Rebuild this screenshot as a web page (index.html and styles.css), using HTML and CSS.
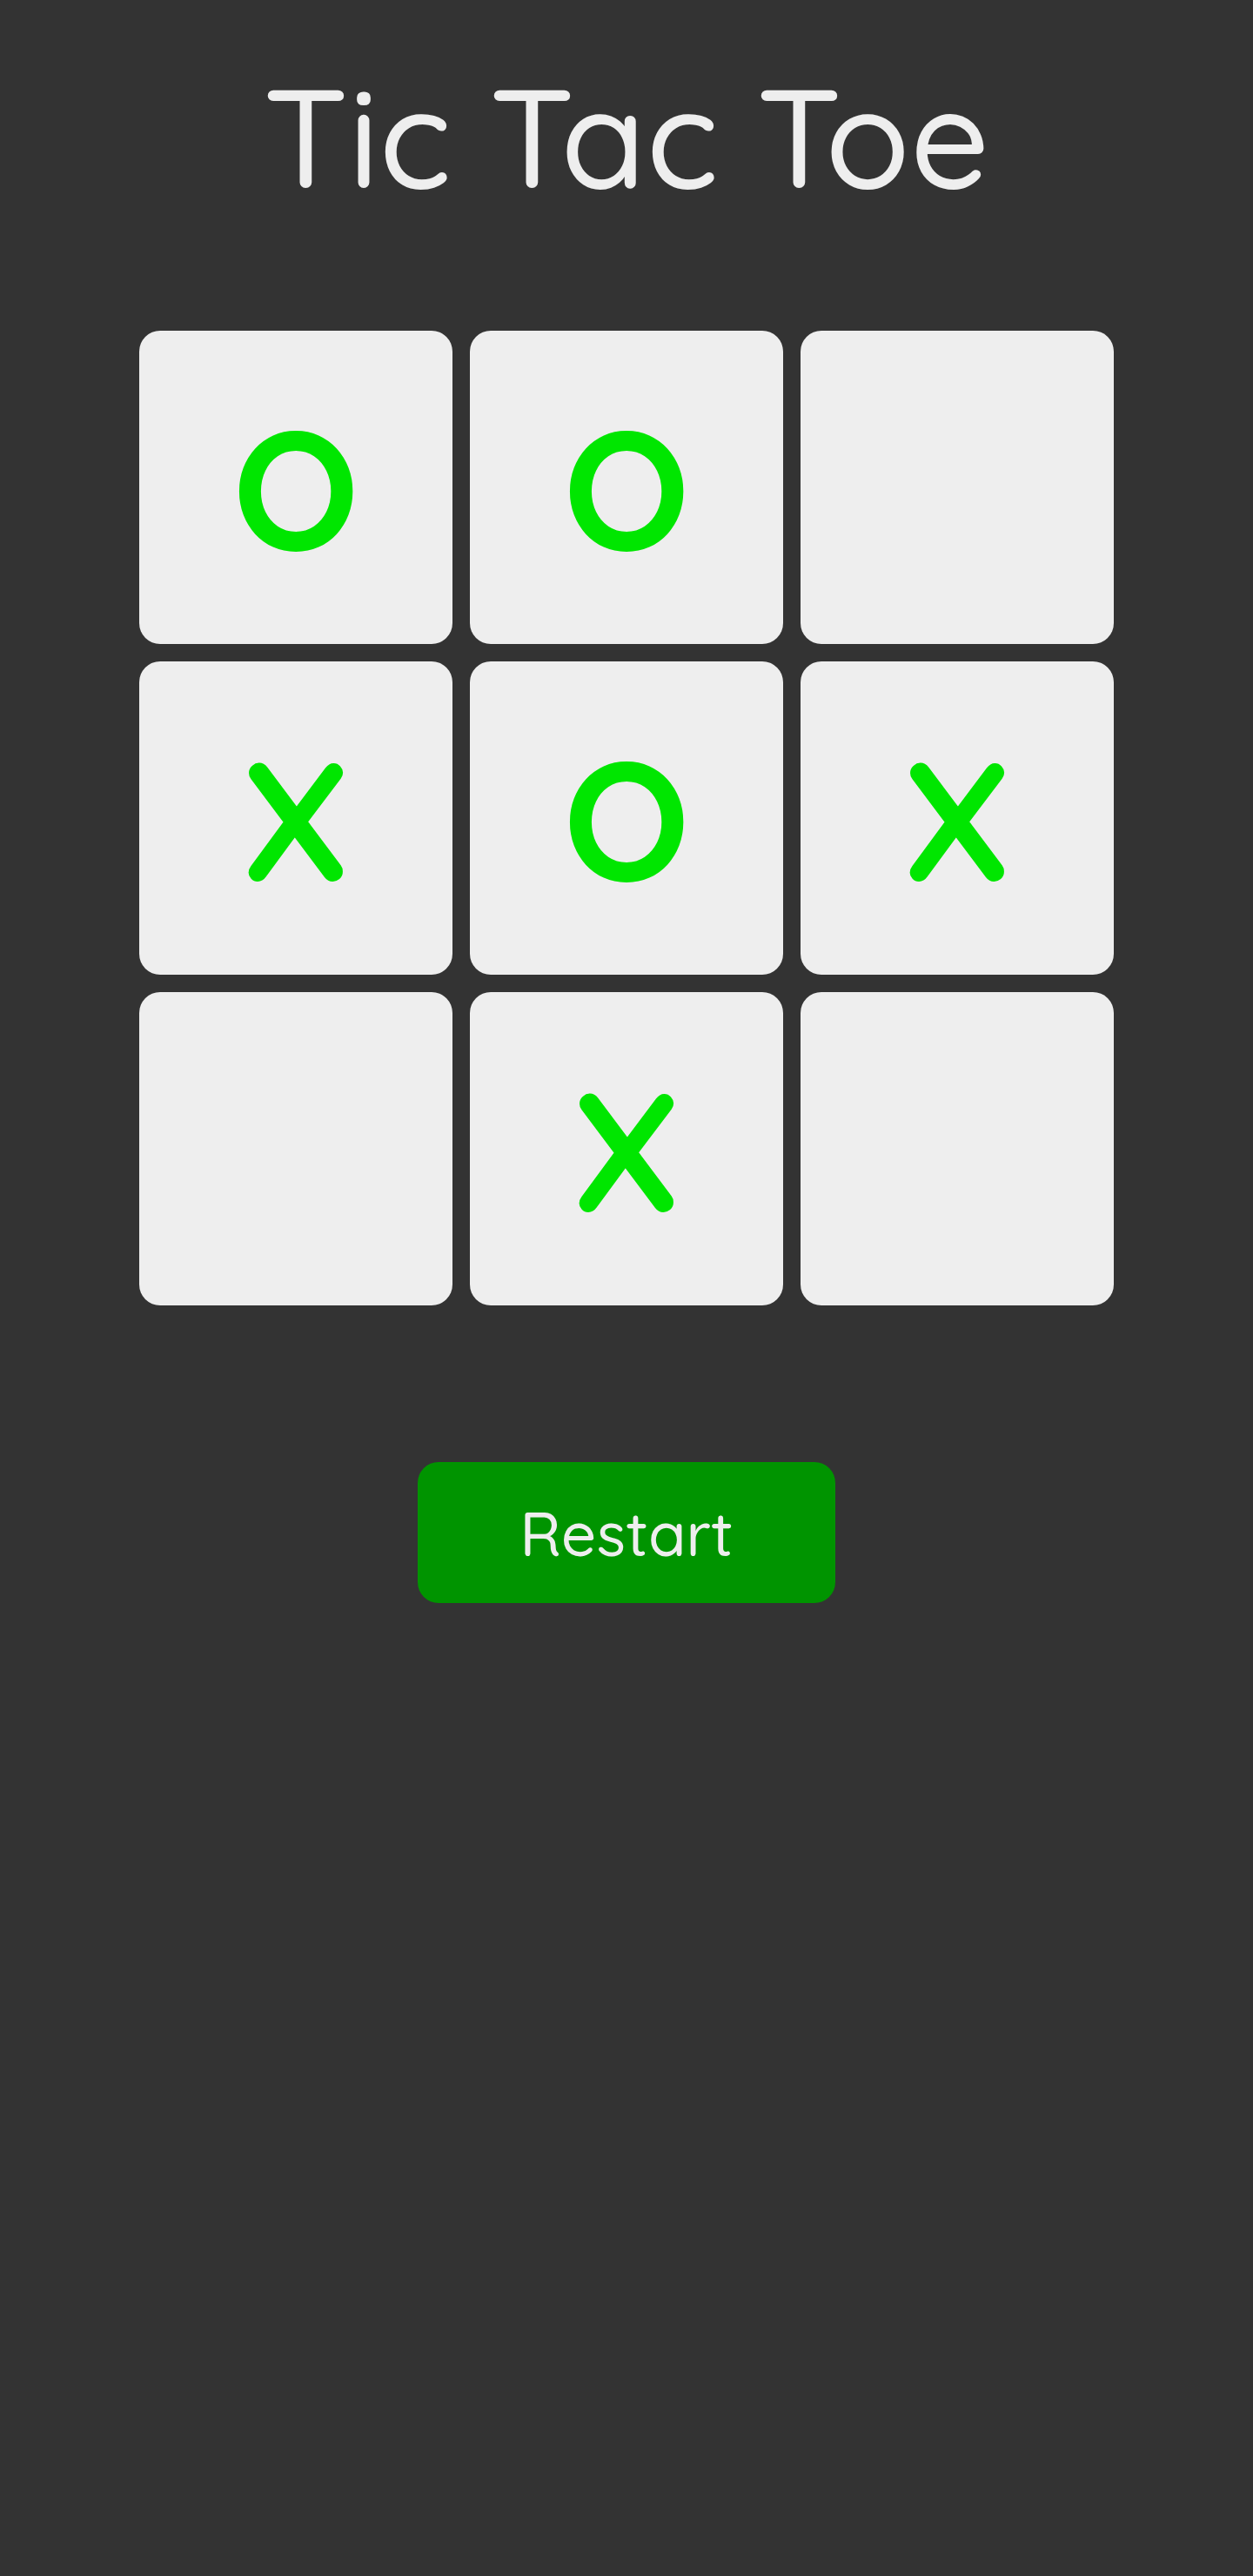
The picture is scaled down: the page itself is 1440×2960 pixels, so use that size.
FILE: index.html
```html
<!DOCTYPE html>
<html lang="en">
<head>
<meta charset="utf-8">
<title>Tic Tac Toe</title>
<link rel="stylesheet" href="styles.css">
</head>
<body>
<main class="game">
  <h1 class="title">Tic Tac Toe</h1>
  <div class="board">
    <div class="cell"><span class="mark">O</span></div>
    <div class="cell"><span class="mark">O</span></div>
    <div class="cell"></div>
    <div class="cell"><span class="mark">X</span></div>
    <div class="cell"><span class="mark">O</span></div>
    <div class="cell"><span class="mark">X</span></div>
    <div class="cell"></div>
    <div class="cell"><span class="mark">X</span></div>
    <div class="cell"></div>
  </div>
  <button class="restart" type="button">Restart</button>
</main>
</body>
</html>
```

FILE: styles.css
```css
html, body {
  margin: 0;
  padding: 0;
  background: #333333;
}
body {
  min-height: 2960px;
  font-family: "Quicksand", "Lato", "Noto Sans", sans-serif;
  color: #eeeeee;
}
.game {
  display: flex;
  flex-direction: column;
  align-items: center;
  padding-top: 56px;
}
.title {
  margin: 0;
  font-size: 160px;
  font-weight: 500;
  line-height: 200px;
  color: #eeeeee;
}
.board {
  margin-top: 124px;
  display: grid;
  grid-template-columns: repeat(3, 360px);
  grid-auto-rows: 360px;
  gap: 20px;
}
.cell {
  background: #eeeeee;
  border-radius: 24px;
  display: flex;
  align-items: center;
  justify-content: center;
}
.mark {
  font-family: "Quicksand", "Lato", sans-serif;
  font-weight: 700;
  font-size: 192px;
  line-height: 1;
  color: #00e600;
}
.restart {
  margin-top: 180px;
  width: 480px;
  height: 162px;
  border: none;
  border-radius: 24px;
  background: #009400;
  color: #eeeeee;
  font-family: "Quicksand", "Lato", sans-serif;
  font-weight: 500;
  font-size: 71px;
}
```
